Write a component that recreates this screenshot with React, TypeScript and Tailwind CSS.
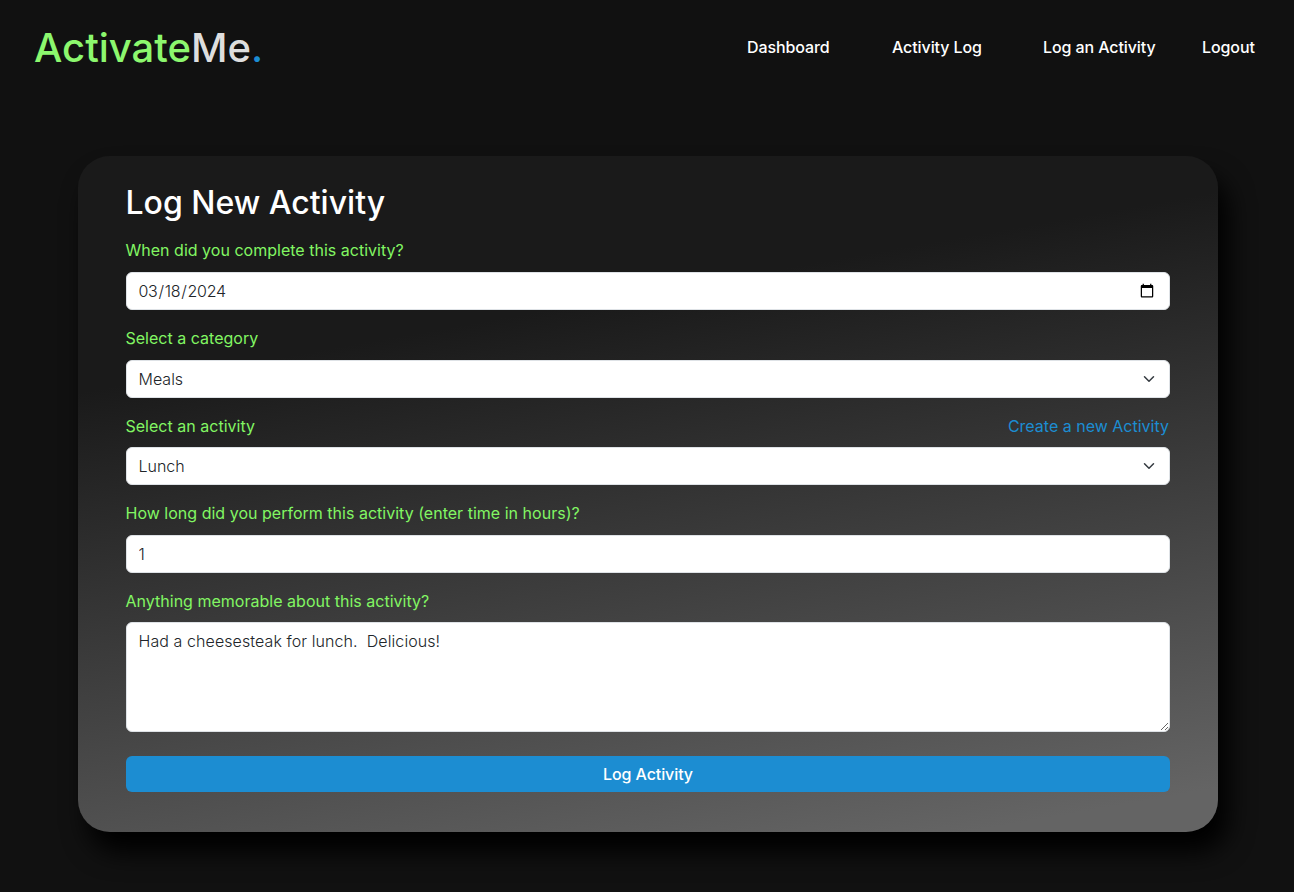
import type { ReactNode } from "react";

const LINKS = [
  { label: "Dashboard", width: "w-[82px] -ml-px mr-px" },
  { label: "Activity Log", width: "w-[90px] ml-[62px]" },
  { label: "Log an Activity", width: "w-[113px] ml-[61px]" },
  { label: "Logout", width: "w-[53px] ml-[46px]" },
];

const CONTROL =
  "block h-[38px] w-full rounded-md border border-[#dee2e6] bg-white pr-3 py-1.5 text-base font-light leading-6 text-[#212529] outline-none";

function Label({ children }: { children: ReactNode }) {
  return (
    <label className="-ml-[0.5px] text-base font-normal leading-[25.6px] tracking-[0.015px] text-[#82f663]">
      {children}
    </label>
  );
}

function Field({ label, aside, children }: { label: string; aside?: ReactNode; children: ReactNode }) {
  return (
    <div className="mb-4">
      <div className="mb-2 flex h-[25.6px] justify-between">
        <Label>{label}</Label>
        {aside}
      </div>
      {children}
    </div>
  );
}

function Select({ value }: { value: string }) {
  return (
    <div className="grid items-center">
      <select className={`${CONTROL} col-start-1 row-start-1 appearance-none pl-[11.5px]`} defaultValue={value}>
        <option>{value}</option>
      </select>
      <svg
        viewBox="0 0 16 16"
        className="pointer-events-none col-start-1 row-start-1 mr-[13px] h-3 w-4 justify-self-end"
        fill="none"
        stroke="#343a40"
        strokeWidth="2"
        strokeLinecap="round"
        strokeLinejoin="round"
      >
        <path d="m2 5 6 6 6-6" />
      </svg>
    </div>
  );
}

export default function App() {
  return (
    <div className="h-[892px] overflow-hidden bg-[#111111] font-['Inter',sans-serif]">
      <header className="flex h-24 items-center pl-[34px] pr-[39px]">
        <a className="text-[40px] font-medium leading-[60px] text-[#8cf76e]">
          Activate<span className="text-[#dedede]">Me</span>
          <span className="text-[#1c8dd2]">.</span>
        </a>
        <nav className="ml-auto flex pb-0.5">
          {LINKS.map((l) => (
            <a key={l.label} className={`${l.width} whitespace-nowrap text-base font-medium leading-6 tracking-[-0.1px] text-white`}>
              {l.label}
            </a>
          ))}
        </nav>
      </header>

      <main className="mx-auto mt-[60px] h-[676px] w-[1140px] translate-x-px rounded-[32px] bg-[linear-gradient(170deg,#1a1a1a_27%,#646464_95%)] px-12 pt-6 shadow-[10px_20px_26px_#000000]">
        <h1 className="-ml-[0.5px] mb-2 h-[50.4px] text-[32px] font-medium leading-[46px] text-white">Log New Activity</h1>
        <Field label="When did you complete this activity?">
          <input type="date" defaultValue="2024-03-18" className={`${CONTROL} pl-[10.5px] tracking-[-0.3px]`} />
        </Field>
        <Field label="Select a category">
          <Select value="Meals" />
        </Field>
        <Field
          label="Select an activity"
          aside={<a className="mr-px text-base font-normal leading-[25.6px] text-[#1c8dd2]">Create a new Activity</a>}
        >
          <Select value="Lunch" />
        </Field>
        <Field label="How long did you perform this activity (enter time in hours)?">
          <input type="text" defaultValue="1" className={`${CONTROL} pl-[11.5px]`} />
        </Field>
        <Field label="Anything memorable about this activity?">
          <textarea
            defaultValue="Had a cheesesteak for lunch.  Delicious!"
            className="block h-[110px] w-full resize-y rounded-md border border-[#dee2e6] bg-white py-1.5 pl-[11.5px] pr-3 text-base font-light leading-6 tracking-[0.08px] text-[#212529] outline-none"
          />
        </Field>
        <button className="mt-6 block h-9 w-full rounded-md bg-[#1c8dd2] text-base font-medium leading-6 tracking-[-0.1px] text-white">
          Log Activity
        </button>
      </main>
    </div>
  );
}
